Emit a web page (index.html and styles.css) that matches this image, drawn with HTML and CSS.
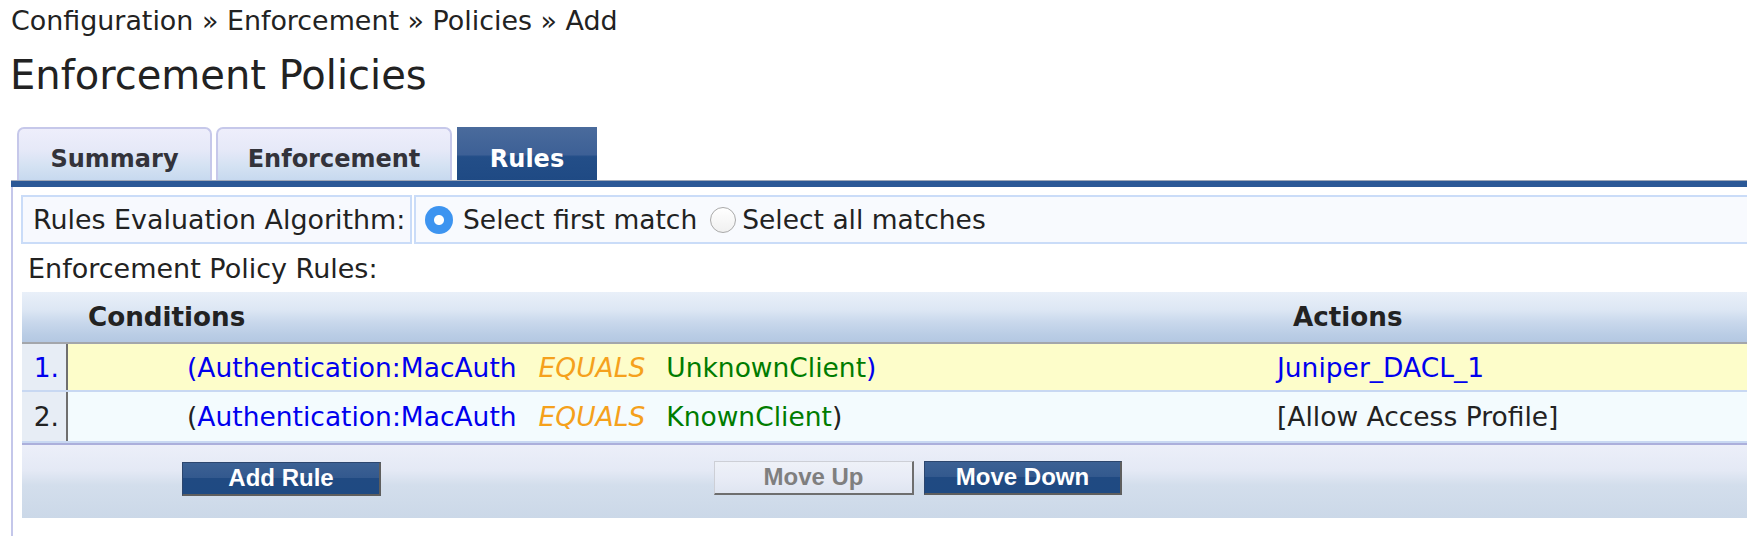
FILE: index.html
```html
<!DOCTYPE html>
<html>
<head>
<meta charset="utf-8">
<title>Enforcement Policies</title>
<link rel="stylesheet" href="styles.css">
</head>
<body>
<div class="page">
  <div class="crumb">Configuration » Enforcement » Policies » Add</div>
  <h1 class="title">Enforcement Policies</h1>
  <div class="tabs">
    <div class="tab tab-summary">Summary</div>
    <div class="tab tab-enf">Enforcement</div>
    <div class="tab tab-active">Rules</div>
  </div>
  <div class="bar"></div>
  <div class="panel">
    <div class="algo">
      <div class="algo-label">Rules Evaluation Algorithm:</div>
      <div class="algo-opts">
        <span class="radio radio-on"></span><span class="opt">Select first match</span>
        <span class="radio radio-off"></span><span class="opt">Select all matches</span>
      </div>
    </div>
    <div class="section-label">Enforcement Policy Rules:</div>
    <div class="rules">
      <div class="rules-head">
        <div class="hd-num"></div>
        <div class="hd-cond">Conditions</div>
        <div class="hd-act">Actions</div>
      </div>
      <div class="rule rule-sel">
        <div class="num num-link">1.</div>
        <div class="cond"><span class="lnk">(Authentication:MacAuth</span><span class="op">EQUALS</span><span class="val">UnknownClient</span><span class="lnk">)</span></div>
        <div class="act"><span class="lnk">Juniper_DACL_1</span></div>
      </div>
      <div class="rule rule-plain">
        <div class="num">2.</div>
        <div class="cond">(<span class="lnk">Authentication:MacAuth</span><span class="op">EQUALS</span><span class="val">KnownClient</span>)</div>
        <div class="act">[Allow Access Profile]</div>
      </div>
      <div class="rules-foot">
        <button class="btn btn-dark btn-add">Add Rule</button>
        <button class="btn btn-off btn-up">Move Up</button>
        <button class="btn btn-dark btn-down">Move Down</button>
      </div>
    </div>
  </div>
</div>
</body>
</html>
```

FILE: styles.css
```css
html, body {
  margin: 0;
  padding: 0;
  background: #ffffff;
  overflow: hidden;
}

.page {
  width: 1800px;
  font-family: "DejaVu Sans", Verdana, sans-serif;
  color: #222222;
}

.crumb {
  padding: 5px 0 0 11px;
  font-size: 26.9px;
  line-height: 32px;
  color: #222222;
}

.title {
  margin: 14px 0 0 10px;
  font-size: 40px;
  font-weight: normal;
  line-height: 48px;
  color: #222222;
}

.tabs {
  display: flex;
  align-items: flex-end;
  margin: 28px 0 0 17px;
  height: 53px;
}

.tab {
  box-sizing: border-box;
  height: 53px;
  padding-top: 15px;
  font-size: 24px;
  font-weight: bold;
  line-height: 30px;
  text-align: center;
  color: #33333a;
  background: linear-gradient(#eeeefb 0%, #e6e9f8 40%, #d3e1f2 75%, #c7d9ef 100%);
  border: 2px solid #c6c8ea;
  border-bottom: none;
  border-radius: 7px 7px 0 0;
}

.tab-summary {
  width: 195px;
}

.tab-enf {
  width: 236px;
  margin-left: 4px;
}

.tab-active {
  width: 140px;
  margin-left: 5px;
  color: #ffffff;
  border: none;
  border-radius: 0;
  padding-top: 17px;
  background: linear-gradient(#4a6b9c 0%, #3d6096 52%, #234e88 56%, #1f4a84 100%);
}

.bar {
  margin-left: 11px;
  height: 6px;
  border-top: 1px solid #9fa8b8;
  background: #2b5896;
}

.panel {
  margin-left: 11px;
  border-left: 2px solid #c4c7ea;
  padding: 8px 0 40px 8px;
}

.algo {
  display: flex;
  height: 49px;
}

.algo-label {
  box-sizing: border-box;
  width: 391px;
  display: flex;
  align-items: center;
  padding-left: 10px;
  border: 2px solid #cadcf8;
  background: #f7f9fe;
  font-size: 26.9px;
  color: #222222;
}

.algo-opts {
  box-sizing: border-box;
  flex: 1;
  margin-left: 2px;
  display: flex;
  align-items: center;
  padding-left: 9px;
  border: 2px solid #cadcf8;
  background: #f8fafe;
  font-size: 26.5px;
  color: #222222;
}

.radio {
  box-sizing: border-box;
  display: inline-block;
  border-radius: 50%;
  flex: none;
}

.radio-on {
  width: 28px;
  height: 28px;
  background: radial-gradient(circle, #ffffff 0 4.5px, #3d94f0 5.5px);
  margin-right: 10px;
}

.radio-off {
  width: 26px;
  height: 26px;
  margin-left: 13px;
  margin-right: 6px;
  border: 1px solid #a9a9a9;
  background: linear-gradient(#ffffff, #f0f0f0);
}

.section-label {
  height: 48px;
  line-height: 50px;
  padding-left: 7px;
  font-size: 27px;
  color: #222222;
}

.rules {
  margin-left: 1px;
  font-size: 26.5px;
}

.rules-head {
  display: grid;
  grid-template-columns: 46px 1194px 1fr;
  align-items: center;
  height: 50px;
  border-bottom: 2px solid #a3a6ab;
  background: linear-gradient(#e9f0f9 0%, #dde7f4 35%, #c9d8ec 60%, #bacde5 85%, #b4c8e2 100%);
  font-size: 26.2px;
  font-weight: bold;
  color: #222222;
}

.hd-cond {
  padding-left: 20px;
}

.hd-act {
  padding-left: 31px;
}

.rule {
  display: grid;
  grid-template-columns: 46px 1194px 1fr;
  border-bottom: 2px solid #c8d8f2;
}

.rule > div {
  display: flex;
  align-items: center;
}

.rule-sel {
  height: 46px;
  background: #fdfdca;
}

.rule-plain {
  height: 49px;
  background: #f3fbfe;
}

.num {
  box-sizing: border-box;
  justify-content: flex-end;
  padding-right: 7px;
  background: #e7edf5;
  border-right: 2px solid #6f6f6f;
  color: #222222;
}

.num-link {
  color: #0000ee;
}

.cond {
  padding-left: 119px;
  white-space: pre;
  color: #222222;
}

.act {
  padding-left: 15px;
  color: #222222;
}

.lnk {
  color: #0000ee;
}

.op {
  margin: 0 21px 0 22px;
  font-style: italic;
  color: #f5a11c;
}

.val {
  color: #007c00;
}

.rules-foot {
  box-sizing: border-box;
  display: flex;
  align-items: flex-start;
  height: 75px;
  padding: 16px 0 0 160px;
  border-top: 2px solid #abafdb;
  background: linear-gradient(#eceff9 0%, #e4e9f5 35%, #d3deec 55%, #cbd8e8 100%);
}

.btn {
  box-sizing: border-box;
  height: 34px;
  padding: 0 0 3px 0;
  font-family: "Liberation Sans", Arial, sans-serif;
  font-size: 24px;
  font-weight: bold;
  line-height: 29px;
  text-align: center;
  cursor: default;
}

.btn-dark {
  color: #ffffff;
  background: linear-gradient(#3c6194 0%, #33598e 47%, #204a82 50%, #1f4a82 100%);
  border-top: 1px solid #2c466e;
  border-left: 1px solid #2c466e;
  border-right: 2px solid #5e5e5e;
  border-bottom: 2px solid #5e5e5e;
}

.btn-off {
  color: #7f7f7f;
  background: linear-gradient(#eef1f8 0%, #e8ecf6 50%, #dfe5f1 100%);
  border-top: 1px solid #cdcfd6;
  border-left: 1px solid #cdcfd6;
  border-right: 2px solid #6e6e6e;
  border-bottom: 2px solid #6e6e6e;
}

.btn-add {
  width: 199px;
  margin-top: 1px;
}

.btn-up {
  width: 200px;
  margin-left: 333px;
}

.btn-down {
  width: 198px;
  margin-left: 10px;
}
```
